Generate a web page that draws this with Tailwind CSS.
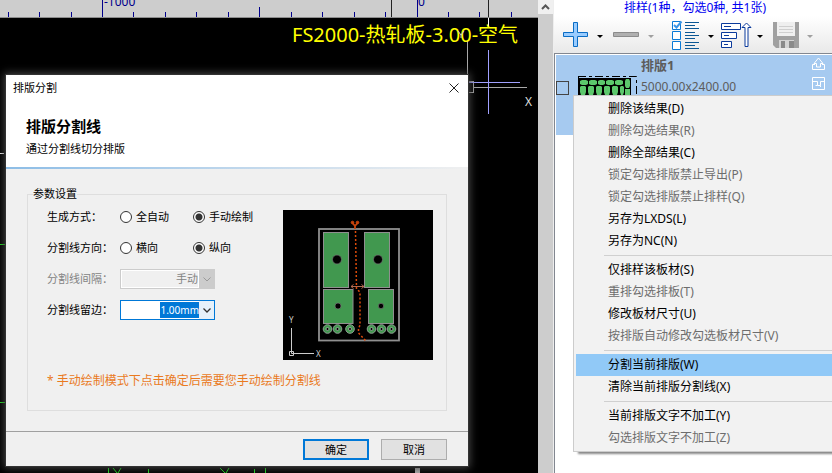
<!DOCTYPE html>
<html lang="zh-CN">
<head>
    <meta charset="UTF-8">
    <meta name="viewport" content="width=device-width, initial-scale=1.0">
    <title>排版分割</title>
    <script src="https://cdn.jsdelivr.net/npm/@tailwindcss/browser@4"></script>
</head>
<body class="flex min-h-screen overflow-hidden bg-white font-['Noto_Sans','Noto_Sans_CJK_SC',sans-serif] text-xs text-black">

    <!-- Drawing area -->
    <main class="relative flex min-w-0 flex-1 flex-col overflow-hidden bg-black">
        <!-- Ruler -->
        <svg class="h-[18px] w-full shrink-0 bg-[#cdcdcd]" shape-rendering="crispEdges">
            <rect x="0" y="17" width="100%" height="1" fill="#8c8c8c" />
            <path d="M8.5 12v5M39.5 12v5M71.5 12v5M102.5 0v17M133.5 12v5M165.5 12v5M196.5 12v5M228.5 12v5M259.5 7v10M291.5 12v5M322.5 12v5M354.5 12v5M385.5 12v5M417.5 0v17M448.5 12v5M479.5 12v5M511.5 12v5" stroke="#00008b" />
            <path d="M391.5 0v17M488.5 0v17" stroke="#222" />
            <text x="104" y="6" font-size="12" fill="#00008b">-1000</text>
            <text x="418" y="6" font-size="12" fill="#00008b">0</text>
        </svg>

        <!-- Canvas -->
        <svg class="w-full flex-1" viewBox="0 18 538 455" preserveAspectRatio="xMinYMin slice">
            <g shape-rendering="crispEdges" fill="none">
                <path d="M467.5 40v35M468 81.500h5v11h-5M473 87.500h54" stroke="#a8a8a8" />
                <path d="M469 82.500h51M488.500 50v64" stroke="#a0a0ff" />
                <path d="M488.500 18v9M0 153.500h4" stroke="#fff" />
                <path d="M0 244.500h5M0 402.500h5M108.500 468v5M148.500 469v4M254.500 469v4M265.500 468v5" stroke="#1ee61e" />
                <path d="M415 468h5v5h-5z" fill="#aaa" />
            </g>
            <path d="M113 468l4 5M121 468l-3 5M220 468l5 5M229 468l-3 5" stroke="#1ee61e" fill="none" />
            <text x="292" y="42" font-size="20" fill="#ffff00">FS2000-热轧板-3.00-空气</text>
            <path d="M458 31l3 4l3-4M461 35v3" stroke="#ccc" fill="none" />
            <text x="525" y="106" font-size="12" fill="#ddd">X</text>
        </svg>

        <!-- Dialog -->
        <form class="absolute top-[75px] left-[6px] w-[462px] bg-[#f0f0f0] text-[11px] leading-4 shadow-[0_0_0_1px_#333,0_0_8px_2px_#444]">
            <header class="bg-white pb-[10px]">
                <div class="flex h-[26px] items-center justify-between pr-[5px] pl-[7px]">
                    <span>排版分割</span>
                    <button type="button" aria-label="关闭" class="flex size-[18px] items-center justify-center">
                        <svg class="size-[10px]" viewBox="0 0 10 10" fill="none" stroke="#222"><path d="M.5 .5l9 9M9.500 .5l-9 9" /></svg>
                    </button>
                </div>
                <h1 class="mt-[15px] px-5 text-[15px] leading-5 font-bold">排版分割线</h1>
                <p class="mt-[5px] px-5">通过分割线切分排版</p>
            </header>
            <div class="h-[2px] bg-linear-to-r from-[#8dbde6] to-[#f0f0f0]"></div>

            <fieldset class="mx-[21px] mt-[17px] border border-[#dedede] pr-[13px] pb-[21px] pl-[19px]">
                <legend class="-ml-[14px] text-[11px] leading-4">参数设置</legend>
                <div class="flex justify-between pt-[5px]">
                    <div class="flex flex-col gap-[11px]">
                        <div class="flex h-5 items-center" role="radiogroup" aria-label="生成方式">
                            <span class="w-[73px]">生成方式：</span>
                            <label class="flex w-[73px] items-center gap-1">
                                <input type="radio" name="mode" class="size-3 appearance-none rounded-full border border-[#333] bg-white checked:bg-[radial-gradient(circle,#333_3px,#fff_4px)]">
                                全自动
                            </label>
                            <label class="flex items-center gap-1">
                                <input type="radio" name="mode" checked class="size-3 appearance-none rounded-full border border-[#333] bg-white checked:bg-[radial-gradient(circle,#333_3px,#fff_4px)]">
                                手动绘制
                            </label>
                        </div>
                        <div class="flex h-5 items-center" role="radiogroup" aria-label="分割线方向">
                            <span class="w-[73px]">分割线方向：</span>
                            <label class="flex w-[73px] items-center gap-1">
                                <input type="radio" name="direction" class="size-3 appearance-none rounded-full border border-[#333] bg-white checked:bg-[radial-gradient(circle,#333_3px,#fff_4px)]">
                                横向
                            </label>
                            <label class="flex items-center gap-1">
                                <input type="radio" name="direction" checked class="size-3 appearance-none rounded-full border border-[#333] bg-white checked:bg-[radial-gradient(circle,#333_3px,#fff_4px)]">
                                纵向
                            </label>
                        </div>
                        <div class="flex h-5 items-center text-[#838383]">
                            <label for="spacing" class="w-[73px]">分割线间隔：</label>
                            <div class="flex h-5 w-[95px] border border-[#ccc] bg-[#ccc]">
                                <select id="spacing" disabled class="w-[78px] appearance-none border border-white bg-[#f0f0f0] text-right text-[11px] leading-4 opacity-100 [text-align-last:right]">
                                    <option>手动</option>
                                </select>
                                <svg class="m-auto h-[5px] w-[8px]" viewBox="0 0 8 5" fill="none" stroke="#999"><path d="M.5 .5L4 4L7.500 .5" /></svg>
                            </div>
                        </div>
                        <div class="flex h-5 items-center">
                            <label for="margin" class="w-[73px]">分割线留边：</label>
                            <div class="flex h-5 w-[95px] items-stretch border border-[#0078d7] bg-white">
                                <input id="margin" type="text" value="1.00mm" class="w-[78px] bg-white text-right text-[10px] leading-4 outline-none selection:bg-[#0078d7] selection:text-white">
                                <button type="button" aria-label="展开" class="flex flex-1 items-center justify-center bg-[#e5f1fb]">
                                    <svg class="h-[5px] w-[8px]" viewBox="0 0 8 5" fill="none" stroke="#333" stroke-width="1.3"><path d="M.5 .5L4 4L7.500 .5" /></svg>
                                </button>
                            </div>
                        </div>
                    </div>

                    <!-- Preview of the cut line -->
                    <svg class="mt-[3px] size-[150px] bg-black" viewBox="0 0 150 150" fill="none">
                        <rect x="36" y="19" width="80" height="111.500" stroke="#8f8f8f" stroke-width="1.800" />
                        <g fill="#41984f" stroke="#8f8f8f">
                            <rect x="40.500" y="22.500" width="25" height="55" />
                            <rect x="81.500" y="22.500" width="25" height="55" />
                            <rect x="40.500" y="79.500" width="29.500" height="34" />
                            <rect x="85.500" y="79.500" width="25" height="34" />
                        </g>
                        <g fill="#000" stroke="#777" stroke-width=".7">
                            <circle cx="54" cy="49.500" r="4.500" />
                            <circle cx="95" cy="49.500" r="4.500" />
                            <circle cx="55" cy="96" r="3" />
                            <circle cx="98" cy="96" r="2.700" />
                        </g>
                        <g fill="#41984f" stroke="#8f9f92">
                            <circle cx="44.500" cy="119" r="4.300" />
                            <circle cx="54.500" cy="119" r="4.300" />
                            <circle cx="67" cy="119" r="4.300" />
                            <circle cx="88.500" cy="119" r="4.300" />
                            <circle cx="98.500" cy="119" r="4.300" />
                            <circle cx="108.500" cy="119" r="4.300" />
                        </g>
                        <g fill="#000" stroke="#bbb" stroke-width=".7">
                            <circle cx="44.500" cy="119" r="1.500" />
                            <circle cx="54.500" cy="119" r="1.500" />
                            <circle cx="67" cy="119" r="1.500" />
                            <circle cx="88.500" cy="119" r="1.500" />
                            <circle cx="98.500" cy="119" r="1.500" />
                            <circle cx="108.500" cy="119" r="1.500" />
                        </g>
                        <path d="M72.500 21L73.500 79L77 82V115L75.500 119V123L83 131" stroke="#dc4b0a" stroke-width="1.500" stroke-dasharray="2 2" />
                        <path d="M72 19V16L69.500 13M72 16L74.500 13" stroke="#c8440c" stroke-width="1.800" />
                        <circle cx="69.500" cy="12.500" r="1.300" fill="#c8440c" stroke="#c8440c" />
                        <circle cx="74.500" cy="12.500" r="1.300" fill="#c8440c" stroke="#c8440c" />
                        <path d="M68 76.500h13M70.500 74.500l-2.500 2l2.500 2M78.500 74.500l2.500 2l-2.500 2" stroke="#b26a50" />
                        <path d="M8.500 118v25.500H31M6.500 141.500h4v4h-4z" stroke="#ccc" />
                        <text x="6" y="113" font-size="8" fill="#ccc">Y</text>
                        <text x="33" y="147" font-size="8" fill="#ccc">X</text>
                    </svg>
                </div>
                <p class="mt-[13px] text-xs leading-4 text-[#ea7a1e]">* 手动绘制模式下点击确定后需要您手动绘制分割线</p>
            </fieldset>

            <footer class="mt-5 flex justify-end gap-3 border-t border-[#a0a0a0] px-[21px] pt-[7px] pb-[6px]">
                <button type="submit" class="h-[21px] w-[66px] border-2 border-[#0078d7] bg-[#e1e1e1] leading-4">确定</button>
                <button type="button" class="h-[21px] w-[66px] border border-[#adadad] bg-[#e1e1e1] leading-4">取消</button>
            </footer>
        </form>
    </main>

    <!-- Vertical scroll bar -->
    <div class="w-4 shrink-0 border-r border-[#eee] bg-[#cdcdcd]">
        <button type="button" aria-label="向上滚动" class="flex h-[14px] w-full items-center justify-center bg-[#f0f0f0]">
            <svg class="h-[6px] w-[9px]" viewBox="0 0 9 6" fill="none" stroke="#555" stroke-width="2"><path d="M1 5l3.500-3.500L8 5" /></svg>
        </button>
    </div>

    <!-- Result panel -->
    <aside class="relative flex w-[278px] shrink-0 flex-col overflow-hidden">
        <h2 class="h-4 pl-1 text-center leading-4 text-[#0000f0]">排样(1种，勾选0种, 共1张)</h2>

        <div class="flex h-[37px] bg-linear-to-b from-white to-[#e9e9e9] pl-[7px]">
            <button type="button" aria-label="添加">
                <svg class="h-[37px] w-[50px]" viewBox="0 0 50 37" fill="none">
                    <path d="M12.500 6.500h4v10h10v4h-10v10h-4v-10h-10v-4h10z" fill="#99ccff" stroke="#0a6cc4" />
                    <path d="M36 19h6l-3 3z" fill="#000" />
                </svg>
            </button>
            <button type="button" aria-label="移除" disabled>
                <svg class="h-[37px] w-[50px]" viewBox="0 0 50 37" fill="none">
                    <path d="M2.500 16.500h25v4h-25z" fill="#b0b0b0" stroke="#8c8c8c" />
                    <path d="M37 19h6l-3 3z" fill="#a0a0a0" />
                </svg>
            </button>
            <button type="button" aria-label="勾选">
                <svg class="h-[37px] w-[60px]" viewBox="0 0 60 37" fill="none">
                    <path d="M11.500 5.500h8v8h-8zM11.500 15.500h8v8h-8zM11.500 25.500h8v8h-8z" fill="#fff" stroke="#0a7ad6" />
                    <path d="M13 9l2.500 2.500L20.500 5.500" stroke="#3c96e6" stroke-width="2" />
                    <path d="M24 6.500h14M24 9.500h10M24 12.500h14M24 16.500h10M24 19.500h14M24 22.500h10M24 26.500h14M24 29.500h10M24 32.500h14" stroke="#0b5794" />
                    <path d="M47 19h6l-3 3z" fill="#000" />
                </svg>
            </button>
            <button type="button" aria-label="排序">
                <svg class="h-[37px] w-[50px]" viewBox="0 0 50 37" fill="none" stroke="#0b3a9c">
                    <path d="M.5 7.500h19v6H.5zM.5 16.500h15v6H.5zM.5 25.500h10v6H.5z" fill="#fff" />
                    <path d="M3 10.500h7M3 19.500h5M3 28.500h4" />
                    <path d="M24 30.500v-19h-3l4.500-4.500l4.500 4.500h-3v19z" fill="#fff" />
                    <path d="M36 19h6l-3 3z" fill="#000" stroke="none" />
                </svg>
            </button>
            <button type="button" aria-label="保存" disabled>
                <svg class="h-[37px] w-[50px]" viewBox="0 0 50 37" fill="none">
                    <path d="M2 6h26v26H5l-3-3z" fill="#a0a0a0" />
                    <path d="M6 6h18v14H6z" fill="#efefef" />
                    <path d="M8 10.500h14M8 13.500h14M8 16.500h14" stroke="#cfcfcf" />
                    <path d="M8 24h15v8H8z" fill="#d4d4d4" />
                    <path d="M10 25h4v7h-4z" fill="#8a8a8a" />
                    <path d="M18 25h5v7h-5z" fill="#8a8a8a" />
                    <path d="M36 19h6l-3 3z" fill="#a0a0a0" />
                </svg>
            </button>
        </div>

        <div class="flex-1 border-t border-l border-[#828790] bg-white pt-px pl-px">
            <div class="flex h-20 items-start bg-[#a6caf0] text-[#5c5c5c]">
                <input type="checkbox" aria-label="排版1" class="mt-[26px] h-[14px] w-[13px] appearance-none border border-[#444]">
                <svg class="mt-[21px] ml-[9px] h-10 w-[60px]" viewBox="0 0 60 40" fill="none">
                    <path d="M0 .5h58.500V40" stroke="#000" stroke-dasharray="8 3 3 3" />
                    <path d="M0 0h1v40H0zM1 2h52v38H1z" fill="#000" />
                    <g fill="#5cc86c">
                        <path d="M2 5l2-1h4l2 1v3l-2 1H4l-2-1zM11 5l2-1h4l2 1v3l-2 1h-4l-2-1zM20 5l2-1h3l2 1v3l-2 1h-3l-2-1zM28 5l2-1h4l2 1v3l-2 1h-4l-2-1zM37 5l2-1h4l2 1v3l-2 1h-4l-2-1z" />
                        <path d="M48 3h3l1 2v5l-1 2h-3l-1-2V5z" />
                        <path d="M2 11l1-1h4l1 1v5l-1 3H3l-1-3zM10 11l1-1h4l1 1v5l-1 3h-4l-1-3zM18 11l1-1h4l1 1v5l-1 3h-4l-1-3zM26 11l1-1h4l1 1v5l-1 3h-4l-1-3zM34 11l1-1h4l1 1v5l-1 3h-4l-1-3zM42 11l1-1h2l1 1v5l-1 3h-2l-1-3zM47 13h5v6h-5z" />
                    </g>
                </svg>
                <div class="ml-[3px] flex-1">
                    <div class="text-[13px] leading-5 font-bold">排版1</div>
                    <div class="text-xs leading-6">5000.00x2400.00</div>
                </div>
                <div class="flex flex-col gap-[6px] pt-[2px] pr-[6px]">
                    <button type="button" aria-label="导出">
                        <svg class="block size-[14px]" viewBox="0 0 14 14" fill="none" stroke="#fff"><path d="M3 7.500H.5v5h12v-5H10M4.500 10V6.500H2L6.500 1L11 6.500H8.500V10z" /></svg>
                    </button>
                    <button type="button" aria-label="布局">
                        <svg class="block size-[14px]" viewBox="0 0 14 14" fill="none" stroke="#fff"><path d="M.5 .5h12v12H.5zM.5 4.500h5v4h3v-4h4M5.500 8.500H3.500M8.500 8.500v1.500" /></svg>
                    </button>
                </div>
            </div>
        </div>

        <!-- Context menu -->
        <div role="menu" class="absolute top-[95px] -right-1 left-[19px] flex flex-col border border-[#ccc] bg-[#f2f2f2] p-[2px] shadow-[4px_3px_2px_-1px_#888]">
            <button type="button" role="menuitem" class="h-[22px] pl-8 text-left">删除该结果(D)</button>
            <button type="button" role="menuitem" disabled class="h-[22px] pl-8 text-left text-[#6d6d6d]">删除勾选结果(R)</button>
            <button type="button" role="menuitem" class="h-[22px] pl-8 text-left">删除全部结果(C)</button>
            <button type="button" role="menuitem" disabled class="h-[22px] pl-8 text-left text-[#6d6d6d]">锁定勾选排版禁止导出(P)</button>
            <button type="button" role="menuitem" disabled class="h-[22px] pl-8 text-left text-[#6d6d6d]">锁定勾选排版禁止排样(Q)</button>
            <button type="button" role="menuitem" class="h-[22px] pl-8 text-left">另存为LXDS(L)</button>
            <button type="button" role="menuitem" class="h-[22px] pl-8 text-left">另存为NC(N)</button>
            <hr class="my-[3px] ml-7 border-[#d0d0d0]">
            <button type="button" role="menuitem" class="h-[22px] pl-8 text-left">仅排样该板材(S)</button>
            <button type="button" role="menuitem" disabled class="h-[22px] pl-8 text-left text-[#6d6d6d]">重排勾选排板(T)</button>
            <button type="button" role="menuitem" class="h-[22px] pl-8 text-left">修改板材尺寸(U)</button>
            <button type="button" role="menuitem" disabled class="h-[22px] pl-8 text-left text-[#6d6d6d]">按排版自动修改勾选板材尺寸(V)</button>
            <hr class="my-[3px] ml-7 border-[#d0d0d0]">
            <button type="button" role="menuitem" class="h-[22px] bg-[#91c9f7] pl-8 text-left">分割当前排版(W)</button>
            <button type="button" role="menuitem" class="h-[22px] pl-8 text-left">清除当前排版分割线(X)</button>
            <hr class="my-[3px] ml-7 border-[#d0d0d0]">
            <button type="button" role="menuitem" class="h-[22px] pl-8 text-left">当前排版文字不加工(Y)</button>
            <button type="button" role="menuitem" disabled class="h-[22px] pl-8 text-left text-[#6d6d6d]">勾选排版文字不加工(Z)</button>
        </div>
    </aside>

    <script>
        const margin = document.getElementById('margin');
        margin.focus();
        margin.select();
    </script>
</body>
</html>
